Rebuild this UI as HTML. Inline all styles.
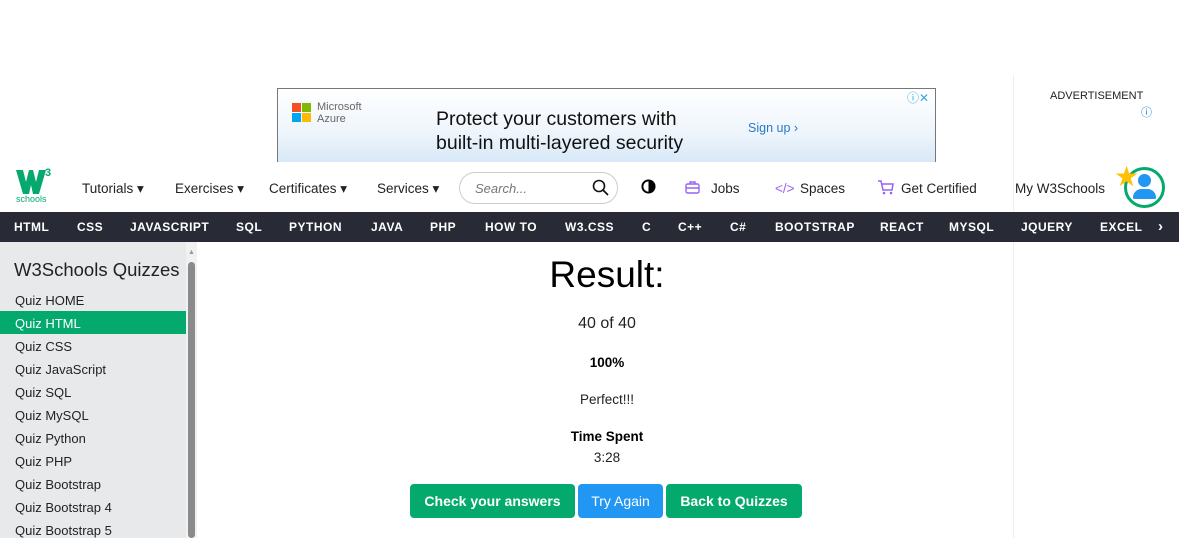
<!DOCTYPE html>
<html><head><meta charset="utf-8"><style>
*{margin:0;padding:0;box-sizing:border-box}
body{width:1179px;height:538px;overflow:hidden;background:#fff;font-family:"Liberation Sans",sans-serif;position:relative;color:#000}
.a{position:absolute;white-space:nowrap}
.nav{font-size:13.5px;color:#222;top:181px}
.tb{top:212px;left:0;width:1179px;height:30px;background:#282A35}
.tb span{position:absolute;top:8px;color:#fff;font-weight:bold;font-size:12px;letter-spacing:.5px}
.sb{top:242px;left:0;width:186px;height:296px;background:#E7E9EB}
.si{left:15px;font-size:13px;color:#222}
.btn{position:absolute;top:484px;height:34px;border-radius:4px;color:#fff;font-weight:bold;font-size:14px;text-align:center;line-height:34px}
</style></head><body>
<div class="a" style="left:1013px;top:75px;width:1px;height:463px;background:#eee"></div>
<div class="a" style="left:1050px;top:90px;font-size:11px;color:#222">ADVERTISEMENT</div>
<div class="a" style="left:1141px;top:104px;font-size:11px;color:#1a73e8">ⓘ</div>
<!-- ad -->
<div class="a" style="left:277px;top:88px;width:659px;height:74px;border:1px solid #777;border-bottom:none;background:linear-gradient(180deg,#fff 0%,#eef5fc 60%,#d8e8f7 100%)"></div>
<div class="a" style="left:292px;top:103px;width:9px;height:9px;background:#f25022"></div>
<div class="a" style="left:302px;top:103px;width:9px;height:9px;background:#7fba00"></div>
<div class="a" style="left:292px;top:113px;width:9px;height:9px;background:#00a4ef"></div>
<div class="a" style="left:302px;top:113px;width:9px;height:9px;background:#ffb900"></div>
<div class="a" style="left:317px;top:101px;font-size:11px;color:#666;line-height:12px">Microsoft<br>Azure</div>
<div class="a" style="left:436px;top:107px;font-size:19.5px;color:#111;line-height:24px">Protect your customers with<br>built-in multi-layered security</div>
<div class="a" style="left:748px;top:121px;font-size:12.5px;color:#2a78c5">Sign up ›</div>
<div class="a" style="left:907px;top:89px;font-size:12px;color:#3ba3e0">ⓘ✕</div>
<!-- navbar -->
<svg class="a" style="left:16px;top:170px" width="30" height="24" viewBox="0 0 30 24"><path d="M0 0H7L10 12L13 0H17L20 12L23 0H30L23 24H17L15 15L13 24H7Z" fill="#04AA6D"/></svg>
<div class="a" style="left:45px;top:167px;font-size:11px;font-weight:bold;color:#04AA6D">3</div>
<div class="a" style="left:16px;top:194px;font-size:9px;color:#04AA6D">schools</div>
<div class="a nav" style="left:82px">Tutorials ▾</div>
<div class="a nav" style="left:175px">Exercises ▾</div>
<div class="a nav" style="left:269px">Certificates ▾</div>
<div class="a nav" style="left:377px">Services ▾</div>
<div class="a" style="left:459px;top:172px;width:159px;height:32px;border:1px solid #ccc;border-radius:16px"></div>
<div class="a" style="left:475px;top:181px;font-size:13px;font-style:italic;color:#777">Search...</div>
<svg class="a" style="left:592px;top:179px" width="17" height="17" viewBox="0 0 17 17"><circle cx="7" cy="7" r="5.5" fill="none" stroke="#111" stroke-width="1.6"/><line x1="11" y1="11" x2="16" y2="16" stroke="#111" stroke-width="1.8"/></svg>
<svg class="a" style="left:641px;top:179px" width="15" height="15" viewBox="0 0 16 16"><circle cx="8" cy="8" r="6.5" fill="#fff" stroke="#000" stroke-width="2"/><path d="M8 1.5A6.5 6.5 0 0 1 8 14.5Z" fill="#000"/></svg>
<svg class="a" style="left:685px;top:181px" width="15" height="13" viewBox="0 0 15 13"><rect x="1" y="3" width="13" height="9" rx="1.5" fill="none" stroke="#9763f6" stroke-width="1.4"/><path d="M5 3V1H10V3M1 7H14" stroke="#9763f6" stroke-width="1.4" fill="none"/></svg>
<div class="a nav" style="left:711px">Jobs</div>
<div class="a nav" style="left:775px;color:#9763f6">&lt;/&gt;</div>
<div class="a nav" style="left:800px">Spaces</div>
<svg class="a" style="left:877px;top:180px" width="17" height="15" viewBox="0 0 17 15"><path d="M1 1H4L6 10H15L16 4H5" fill="none" stroke="#9763f6" stroke-width="1.5"/><circle cx="7" cy="13" r="1.3" fill="#9763f6"/><circle cx="14" cy="13" r="1.3" fill="#9763f6"/></svg>
<div class="a nav" style="left:901px">Get Certified</div>
<div class="a nav" style="left:1015px">My W3Schools</div>
<div class="a" style="left:1124px;top:167px;width:41px;height:41px;border:3px solid #04AA6D;border-radius:50%;background:#fff"></div>
<div class="a" style="left:1138px;top:174px;width:13px;height:13px;border-radius:50%;background:#2196F3"></div>
<div class="a" style="left:1133px;top:189px;width:23px;height:10px;border-radius:11px 11px 2px 2px;background:#2196F3"></div>
<div class="a" style="left:1114px;top:160px;font-size:28px;color:#FFC107">★</div>
<!-- topbar -->
<div class="a tb">
<span style="left:14px">HTML</span><span style="left:77px">CSS</span><span style="left:130px">JAVASCRIPT</span><span style="left:236px">SQL</span><span style="left:289px">PYTHON</span><span style="left:371px">JAVA</span><span style="left:430px">PHP</span><span style="left:485px">HOW TO</span><span style="left:565px">W3.CSS</span><span style="left:642px">C</span><span style="left:678px">C++</span><span style="left:730px">C#</span><span style="left:775px">BOOTSTRAP</span><span style="left:880px">REACT</span><span style="left:949px">MYSQL</span><span style="left:1021px">JQUERY</span><span style="left:1100px">EXCEL</span><span style="left:1158px;font-size:15px;top:6px">›</span>
</div>
<!-- sidebar -->
<div class="a sb"></div>
<div class="a" style="left:186px;top:242px;width:11px;height:296px;background:#f1f1f1"></div>
<div class="a" style="left:188px;top:262px;width:7px;height:276px;background:#8a8a8a;border-radius:4px"></div>
<div class="a" style="left:188px;top:249px;font-size:7px;color:#999">▲</div>
<div class="a" style="left:14px;top:259px;font-size:18.5px;color:#222">W3Schools Quizzes</div>
<div class="a" style="left:0;top:311px;width:186px;height:23px;background:#04AA6D"></div>
<div class="a si" style="top:293px">Quiz HOME</div>
<div class="a si" style="top:316px;color:#fff">Quiz HTML</div>
<div class="a si" style="top:339px">Quiz CSS</div>
<div class="a si" style="top:362px">Quiz JavaScript</div>
<div class="a si" style="top:385px">Quiz SQL</div>
<div class="a si" style="top:408px">Quiz MySQL</div>
<div class="a si" style="top:431px">Quiz Python</div>
<div class="a si" style="top:454px">Quiz PHP</div>
<div class="a si" style="top:477px">Quiz Bootstrap</div>
<div class="a si" style="top:500px">Quiz Bootstrap 4</div>
<div class="a si" style="top:523px">Quiz Bootstrap 5</div>
<!-- content -->
<div class="a" style="left:407px;width:400px;text-align:center;top:254px;font-size:37px">Result:</div>
<div class="a" style="left:407px;width:400px;text-align:center;top:315px;font-size:16px;color:#222">40 of 40</div>
<div class="a" style="left:407px;width:400px;text-align:center;top:355px;font-size:13.5px;font-weight:bold">100%</div>
<div class="a" style="left:407px;width:400px;text-align:center;top:392px;font-size:13.5px;color:#222">Perfect!!!</div>
<div class="a" style="left:407px;width:400px;text-align:center;top:429px;font-size:13.5px;font-weight:bold">Time Spent</div>
<div class="a" style="left:407px;width:400px;text-align:center;top:450px;font-size:13.5px;color:#222">3:28</div>
<div class="btn" style="left:410px;width:165px;background:#04AA6D">Check your answers</div>
<div class="btn" style="left:578px;width:85px;background:#2196F3;font-weight:normal">Try Again</div>
<div class="btn" style="left:666px;width:136px;background:#04AA6D">Back to Quizzes</div>
</body></html>
